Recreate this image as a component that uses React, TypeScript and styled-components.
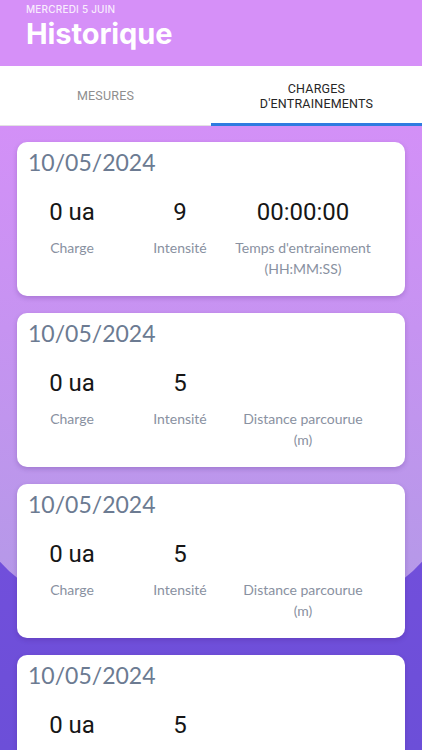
import React from 'react';
import styled, { createGlobalStyle } from 'styled-components';

interface Stat {
  value: string;
  label: string;
  unit?: string;
}

interface Session {
  date: string;
  stats: Stat[];
}

const sessions: Session[] = [
  {
    date: '10/05/2024',
    stats: [
      { value: '0 ua', label: 'Charge' },
      { value: '9', label: 'Intensité' },
      { value: '00:00:00', label: "Temps d'entrainement", unit: '(HH:MM:SS)' },
    ],
  },
  {
    date: '10/05/2024',
    stats: [
      { value: '0 ua', label: 'Charge' },
      { value: '5', label: 'Intensité' },
      { value: '', label: 'Distance parcourue', unit: '(m)' },
    ],
  },
  {
    date: '10/05/2024',
    stats: [
      { value: '0 ua', label: 'Charge' },
      { value: '5', label: 'Intensité' },
      { value: '', label: 'Distance parcourue', unit: '(m)' },
    ],
  },
  {
    date: '10/05/2024',
    stats: [
      { value: '0 ua', label: 'Charge' },
      { value: '5', label: 'Intensité' },
      { value: '', label: 'Distance parcourue', unit: '(m)' },
    ],
  },
];

const GlobalStyle = createGlobalStyle`
  html, body {
    margin: 0;
    padding: 0;
    height: 750px;
    overflow: hidden;
  }
  body {
    font-family: Lato, "Noto Sans", sans-serif;
  }
  * {
    box-sizing: border-box;
  }
`;

const Screen = styled.div`
  width: 422px;
  height: 750px;
  display: flex;
  flex-direction: column;
  overflow: hidden;
`;

const Header = styled.header`
  height: 66px;
  background: #d690f8;
  padding: 3px 26px 0;
  display: flex;
  flex-direction: column;
`;

const DateLine = styled.div`
  font-family: Inter, "Liberation Sans", sans-serif;
  font-size: 10px;
  font-weight: 500;
  line-height: 12px;
  color: rgba(255, 255, 255, 0.85);
  letter-spacing: 0.2px;
`;

const Title = styled.h1`
  margin: 2px 0 0;
  font-family: Inter, "Liberation Sans", sans-serif;
  font-size: 29px;
  font-weight: 700;
  line-height: 34px;
  color: #ffffff;
  letter-spacing: -0.1px;
`;

const TabBar = styled.nav`
  height: 60px;
  background: #ffffff;
  display: grid;
  grid-template-columns: 1fr 1fr;
  border-bottom: 1px solid #e2e2e2;
`;

const Tab = styled.div<{ active?: boolean }>`
  display: flex;
  align-items: center;
  justify-content: center;
  text-align: center;
  font-family: Roboto, "Liberation Sans", sans-serif;
  font-size: 12.5px;
  line-height: 15px;
  letter-spacing: 0.2px;
  color: ${p => (p.active ? '#262626' : '#8e8e8e')};
  border-bottom: 3px solid ${p => (p.active ? '#2f7be0' : 'transparent')};
  margin-bottom: -1px;
  padding-top: 2px;
`;

const Content = styled.main`
  position: relative;
  flex: 1;
  overflow: hidden;
  background: linear-gradient(180deg, #7d4fe1 0%, #6c4fd8 100%);
`;

/* light lavender shape with an elliptical bottom edge behind the cards */
const Backdrop = styled.div`
  position: absolute;
  top: 0;
  left: -19px;
  right: -19px;
  height: 505px;
  border-bottom-left-radius: 230px 115px;
  border-bottom-right-radius: 230px 115px;
  background: linear-gradient(180deg, #d390f7 0%, #c693f1 40%, #b798e9 85%, #b39ae6 100%);
`;

const CardList = styled.div`
  position: relative;
  display: flex;
  flex-direction: column;
  gap: 17px;
  padding: 16px 17px;
`;

const Card = styled.section`
  height: 154px;
  flex-shrink: 0;
  background: #ffffff;
  border-radius: 10px;
  box-shadow: 0 2px 5px rgba(60, 20, 110, 0.22);
  padding: 5px 0 0 11px;
`;

const CardDate = styled.div`
  font-family: Lato, "Noto Sans", sans-serif;
  font-size: 23px;
  line-height: 30px;
  color: #6c7b92;
`;

const StatRow = styled.div`
  display: grid;
  grid-template-columns: 100px 116px 130px;
  margin-top: 20px;
  margin-left: -11px;
  padding-left: 5px;
`;

const StatCol = styled.div`
  display: flex;
  flex-direction: column;
  align-items: center;
  text-align: center;
`;

const StatValue = styled.div`
  font-family: Roboto, "Liberation Sans", sans-serif;
  font-size: 24px;
  line-height: 30px;
  height: 30px;
  color: #161616;
`;

const StatLabel = styled.div`
  margin-top: 10px;
  font-family: Lato, "Noto Sans", sans-serif;
  font-size: 14px;
  line-height: 21px;
  color: #8991a1;
  white-space: nowrap;
`;

export default function App() {
  return (
    <Screen>
      <GlobalStyle />
      <Header>
        <DateLine>MERCREDI 5 JUIN</DateLine>
        <Title>Historique</Title>
      </Header>
      <TabBar>
        <Tab>MESURES</Tab>
        <Tab active>
          CHARGES
          <br />
          D'ENTRAINEMENTS
        </Tab>
      </TabBar>
      <Content>
        <Backdrop />
        <CardList>
          {sessions.map((session, index) => (
            <Card key={index}>
              <CardDate>{session.date}</CardDate>
              <StatRow>
                {session.stats.map((stat, statIndex) => (
                  <StatCol key={statIndex}>
                    <StatValue>{stat.value}</StatValue>
                    <StatLabel>
                      {stat.label}
                      {stat.unit && (
                        <>
                          <br />
                          {stat.unit}
                        </>
                      )}
                    </StatLabel>
                  </StatCol>
                ))}
              </StatRow>
            </Card>
          ))}
        </CardList>
      </Content>
    </Screen>
  );
}
